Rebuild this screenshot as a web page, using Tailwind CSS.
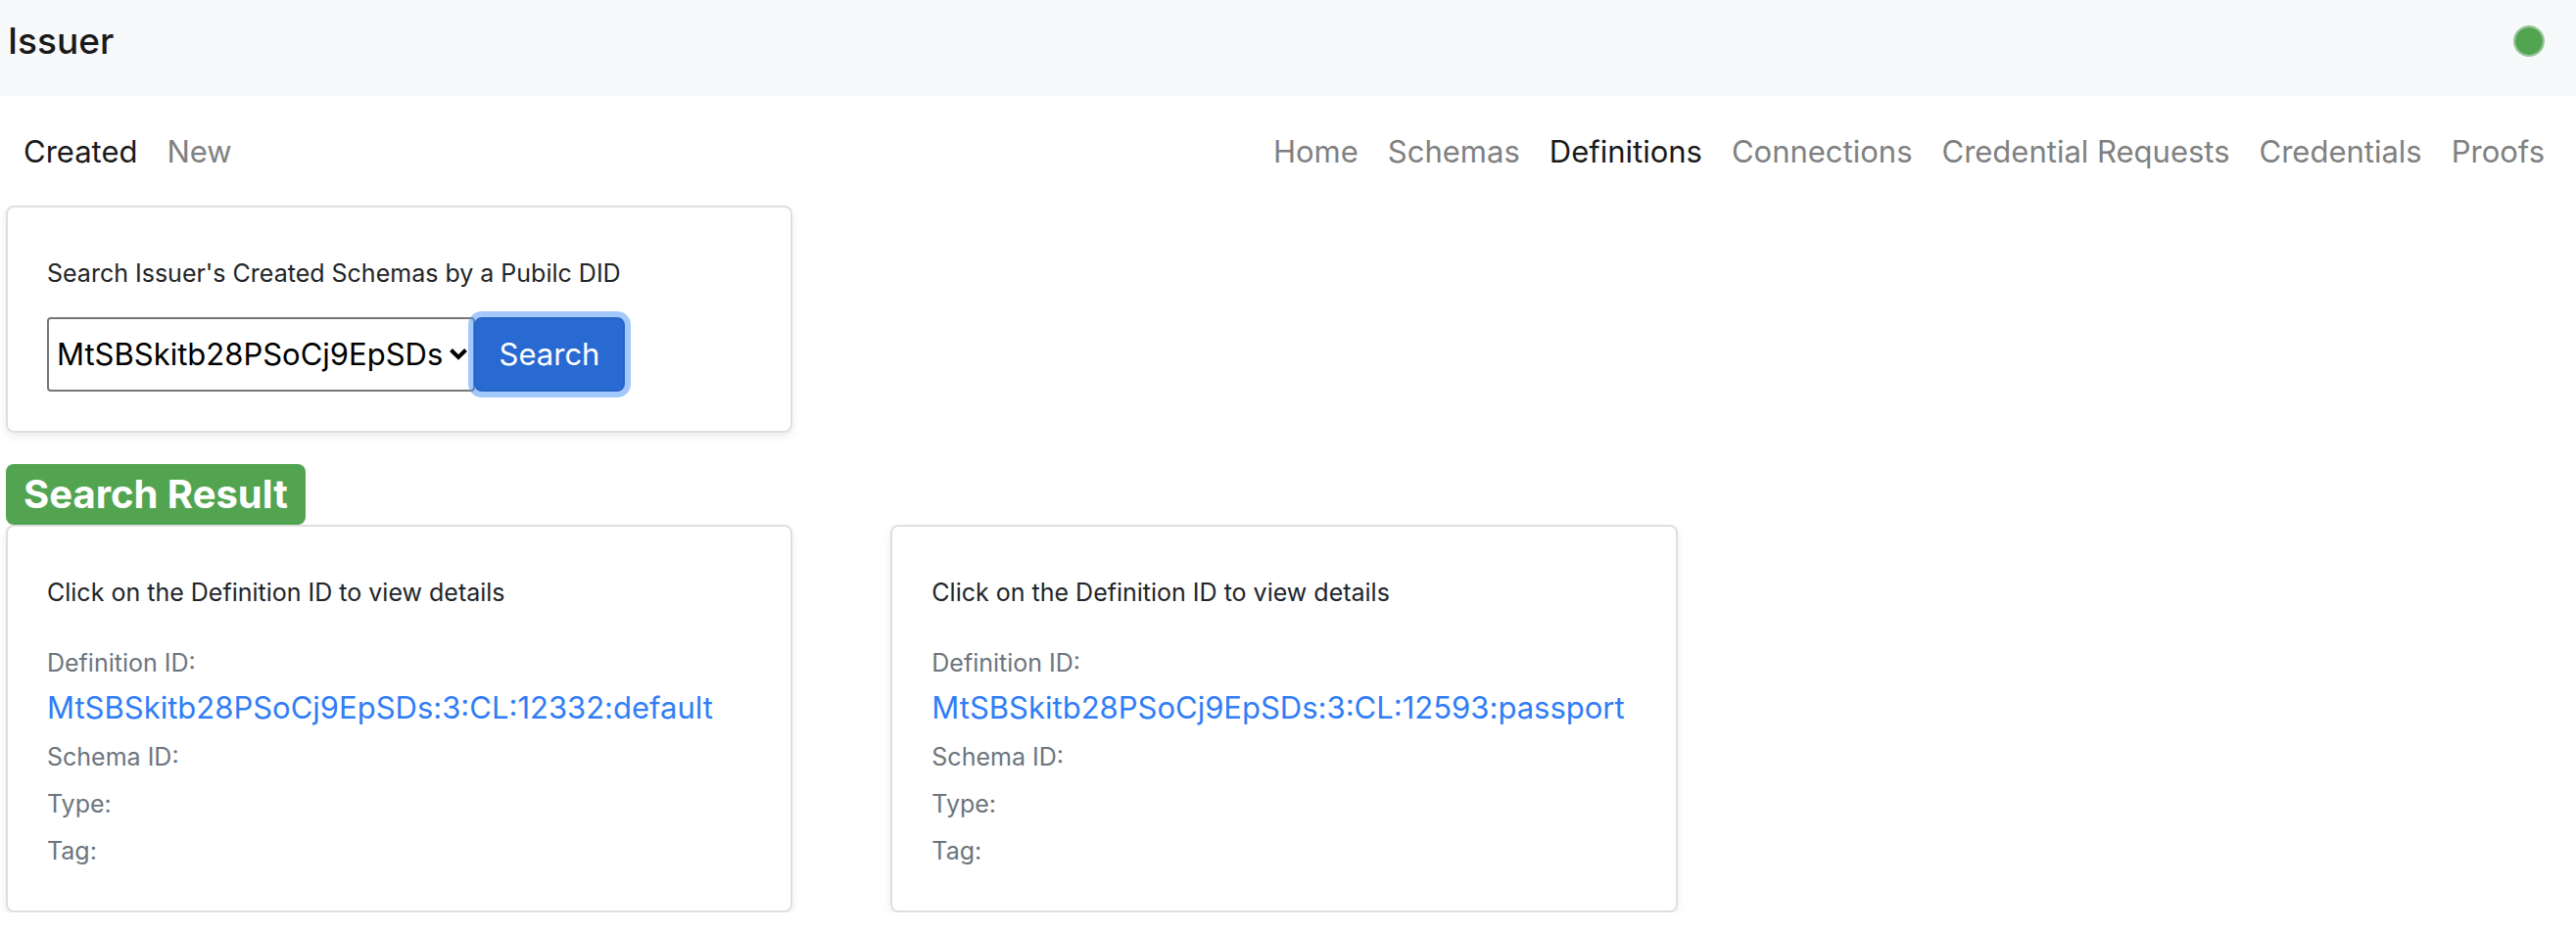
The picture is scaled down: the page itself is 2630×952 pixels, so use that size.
<!DOCTYPE html>
<html lang="en">
<head>
<meta charset="utf-8">
<meta name="viewport" content="width=device-width, initial-scale=1">
<title>Issuer</title>
<script src="https://cdn.jsdelivr.net/npm/@tailwindcss/browser@4"></script>
</head>
<body class="bg-white font-[Inter,'Liberation_Sans',sans-serif] text-[#212529]">
<header class="flex h-[98px] items-start justify-between bg-[#f8f9fb] pt-3 pr-8 pl-2">
  <a href="#" class="text-[37px] leading-[60px] font-medium text-[#1a1a1a]">Issuer</a>
  <span class="mt-3.5 size-8 rounded-full border-2 border-[#53a451]/60 bg-[#53a451] bg-clip-padding" role="img" aria-label="Connected"></span>
</header>
<div class="flex flex-wrap items-center justify-between pt-8 pr-8 pb-[30px] pl-6 text-[31px] leading-[50px] text-[#808080]">
  <nav class="flex gap-[30px]" aria-label="Definitions">
    <a href="#" class="text-[#1a1a1a]">Created</a>
    <a href="#">New</a>
  </nav>
  <nav class="flex flex-wrap gap-x-[30px]" aria-label="Main">
    <a href="#">Home</a>
    <a href="#">Schemas</a>
    <a href="#" class="text-[#1a1a1a]">Definitions</a>
    <a href="#">Connections</a>
    <a href="#">Credential Requests</a>
    <a href="#">Credentials</a>
    <a href="#">Proofs</a>
  </nav>
</div>
<main class="pr-3.5 pl-1.5">
  <div class="grid grid-cols-3 gap-x-[100px]">
    <form class="rounded-lg border-2 border-[#dfdfdf] p-10 shadow-[0_4px_8px_rgba(0,0,0,0.075)]">
      <label for="did" class="mb-[18px] block text-[25px] leading-[54px]">Search Issuer's Created Schemas by a Pubilc DID</label>
      <div class="flex">
        <div class="relative">
          <select id="did" class="h-[76px] w-[437px] appearance-none rounded border-2 border-[#767676] bg-white pl-2 text-[31px] text-black">
            <option>MtSBSkitb28PSoCj9EpSDs</option>
          </select>
          <svg class="pointer-events-none absolute top-8 right-2 h-3 w-[18px]" viewBox="0 0 18 12" fill="none" stroke="#000" stroke-width="4" aria-hidden="true"><path d="M1.5 1.5 9 9l7.500-7.500"/></svg>
        </div>
        <button type="button" class="relative -ml-px h-[76px] w-[154px] rounded-lg border-2 border-[#2664c4] bg-[#2969d2] text-[31px] text-white shadow-[0_0_0_6px_rgba(72,145,247,0.5)]">Search</button>
      </div>
    </form>
  </div>
  <h2 class="mt-8 flex"><span class="rounded-lg bg-[#53a451] px-[18px] text-[40px] leading-[62px] font-bold text-white">Search Result</span></h2>
  <div class="grid grid-cols-3 gap-x-[100px]">
    <section class="rounded-lg border-2 border-[#dfdfdf] p-10 shadow-[0_4px_8px_rgba(0,0,0,0.075)]">
      <p class="mb-6 text-[25px] leading-[54px]">Click on the Definition ID to view details</p>
      <div class="flex flex-col gap-1.5 text-[25px] leading-[42px] text-[#6c757d]">
        <p>Definition ID:</p>
        <a href="#" class="mb-1 text-[31px] leading-[38px] text-[#307df6]">MtSBSkitb28PSoCj9EpSDs:3:CL:12332:default</a>
        <p>Schema ID:</p>
        <p>Type:</p>
        <p>Tag:</p>
      </div>
    </section>
    <section class="rounded-lg border-2 border-[#dfdfdf] p-10 shadow-[0_4px_8px_rgba(0,0,0,0.075)]">
      <p class="mb-6 text-[25px] leading-[54px]">Click on the Definition ID to view details</p>
      <div class="flex flex-col gap-1.5 text-[25px] leading-[42px] text-[#6c757d]">
        <p>Definition ID:</p>
        <a href="#" class="mb-1 text-[31px] leading-[38px] text-[#307df6]">MtSBSkitb28PSoCj9EpSDs:3:CL:12593:passport</a>
        <p>Schema ID:</p>
        <p>Type:</p>
        <p>Tag:</p>
      </div>
    </section>
  </div>
</main>
</body>
</html>
